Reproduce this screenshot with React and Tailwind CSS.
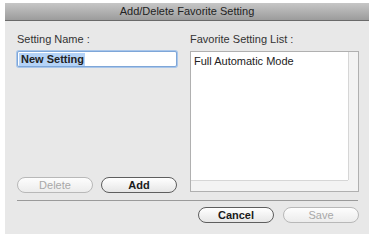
const Button = ({ label, disabled }) => {
  return (
    <button
      className={
        disabled
          ? 'h-[16px] w-[76px] rounded-full border border-[#b8b8b8] bg-gradient-to-b from-[#fdfdfd] to-[#ececec] text-[11px] leading-none text-[#a8a8a8]'
          : 'h-[16px] w-[76px] rounded-full border border-[#5e5e5e] bg-gradient-to-b from-[#ffffff] to-[#e6e6e6] text-[11px] font-bold leading-none text-[#1a1a1a]'
      }
    >
      {label}
    </button>
  );
};

const App = () => {
  return (
    <div className="h-[240px] w-[371px] bg-white pl-[5px] pt-[3px] font-['Liberation_Sans',sans-serif]">
      <div className="flex h-[231px] w-[364px] flex-col bg-[#e8e8e8]">
        <div className="flex h-[18px] items-center justify-center border-b border-[#6a6a6a] bg-gradient-to-b from-[#c6c6c6] to-[#9c9c9c] text-[11px] text-[#222]">
          Add/Delete Favorite Setting
        </div>

        <div className="flex gap-[13px] pl-[12px] pt-[11px]">
          <div className="flex w-[160px] flex-col">
            <p className="text-[11px] leading-[14px] text-[#333]">Setting Name :</p>
            <div className="mt-[5px] flex h-[16px] items-center rounded-[2px] border border-[#7ea6d8] bg-white px-[1px] shadow-[0_0_0_1px_#a9c6ea]">
              <span className="bg-[#b5d3f7] pl-[2px] pr-[1px] text-[11px] font-bold leading-[13px] text-[#222]">New Setting</span>
            </div>
            <div className="mt-[110px] flex justify-between">
              <Button label="Delete" disabled />
              <Button label="Add" />
            </div>
          </div>

          <div className="flex w-[169px] flex-col">
            <p className="text-[11px] leading-[14px] text-[#333]">Favorite Setting List :</p>
            <div className="mt-[5px] grid h-[141px] grid-cols-[1fr_10px] grid-rows-[1fr_11px] border border-[#b0b0b0] bg-white">
              <div className="px-[3px] pt-[2px] text-[11px] leading-[14px] text-[#222]">Full Automatic Mode</div>
              <div className="border-l border-[#d6d6d6] bg-[#f3f3f3]" />
              <div className="border-t border-[#d6d6d6] bg-[#f3f3f3]" />
              <div className="bg-[#f3f3f3]" />
            </div>
          </div>
        </div>

        <div className="ml-[12px] mt-[7px] h-px w-[341px] bg-[#9a9a9a]" />

        <div className="flex justify-end gap-[9px] pr-[10px] pt-[6px]">
          <Button label="Cancel" />
          <Button label="Save" disabled />
        </div>
      </div>
    </div>
  );
};

export default App;
